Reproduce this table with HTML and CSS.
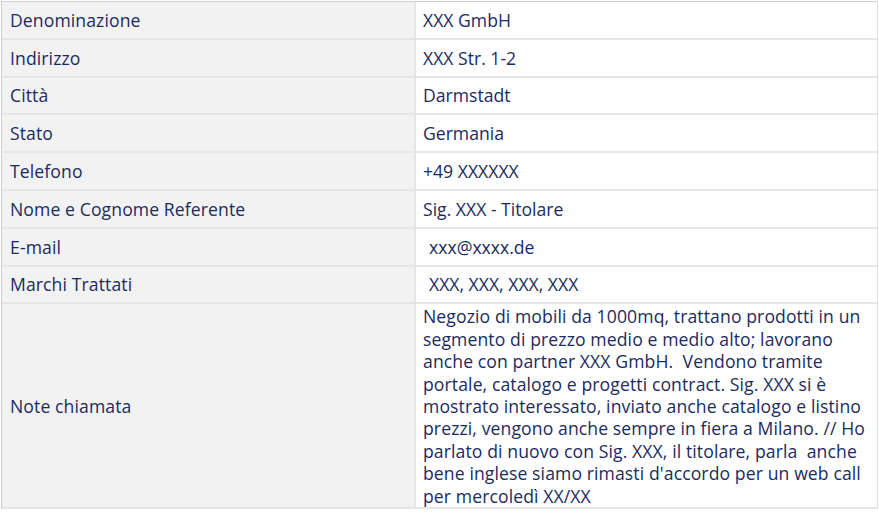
FILE: index.html
```html
<!DOCTYPE html>
<html lang="it">
<head>
<meta charset="utf-8">
<title>Scheda contatto</title>
<link rel="stylesheet" href="styles.css">
</head>
<body>
<div class="sheet">
  <div class="row"><div class="label">Denominazione</div><div class="value">XXX GmbH</div></div>
  <div class="row"><div class="label">Indirizzo</div><div class="value">XXX Str. 1-2</div></div>
  <div class="row"><div class="label">Città</div><div class="value">Darmstadt</div></div>
  <div class="row"><div class="label">Stato</div><div class="value">Germania</div></div>
  <div class="row"><div class="label">Telefono</div><div class="value">+49 XXXXXX</div></div>
  <div class="row"><div class="label">Nome e Cognome Referente</div><div class="value">Sig. XXX - Titolare</div></div>
  <div class="row"><div class="label">E-mail</div><div class="value indent">xxx@xxxx.de</div></div>
  <div class="row"><div class="label">Marchi Trattati</div><div class="value indent">XXX, XXX, XXX, XXX</div></div>
  <div class="row notes"><div class="label">Note chiamata</div><div class="value">Negozio di mobili da 1000mq, trattano prodotti in un<br>segmento di prezzo medio e medio alto; lavorano<br>anche con partner XXX GmbH.&nbsp; Vendono tramite<br>portale, catalogo e progetti contract. Sig. XXX si è<br>mostrato interessato, inviato anche catalogo e listino<br>prezzi, vengono anche sempre in fiera a Milano. // Ho<br>parlato di nuovo con Sig. XXX, il titolare, parla&nbsp; anche<br>bene inglese siamo rimasti d'accordo per un web call<br>per mercoledì XX/XX</div></div>
</div>
</body>
</html>
```
FILE: styles.css
```css
html, body {
  margin: 0;
  padding: 0;
  background: #ffffff;
}
.sheet {
  margin: 1px 0 0 1px;
  width: 877px;
  border-top: 1px solid #cfcfcf;
  border-left: 1px solid #cfcfcf;
  border-right: 1px solid #dedede;
  font-family: "Open Sans", "Noto Sans", sans-serif;
  font-size: 17.6px;
  color: #1c2b5e;
  box-sizing: border-box;
}
.row {
  display: grid;
  grid-template-columns: 414px 1fr;
  height: 37.8px;
  border-bottom: 2px solid #e6e6e6;
  box-sizing: border-box;
}
.label {
  background: #f2f2f2;
  padding-left: 8px;
  display: flex;
  align-items: center;
  border-right: 2px solid #e6e6e6;
  letter-spacing: 0.1px;
}
.value {
  padding-left: 7px;
  display: flex;
  align-items: center;
}
.value.indent {
  padding-left: 13px;
}
.row.notes {
  height: 205px;
}
.notes .value {
  display: block;
  line-height: 22.4px;
  padding-top: 1px;
  white-space: nowrap;
  letter-spacing: 0.1px;
  overflow: hidden;
}
```
